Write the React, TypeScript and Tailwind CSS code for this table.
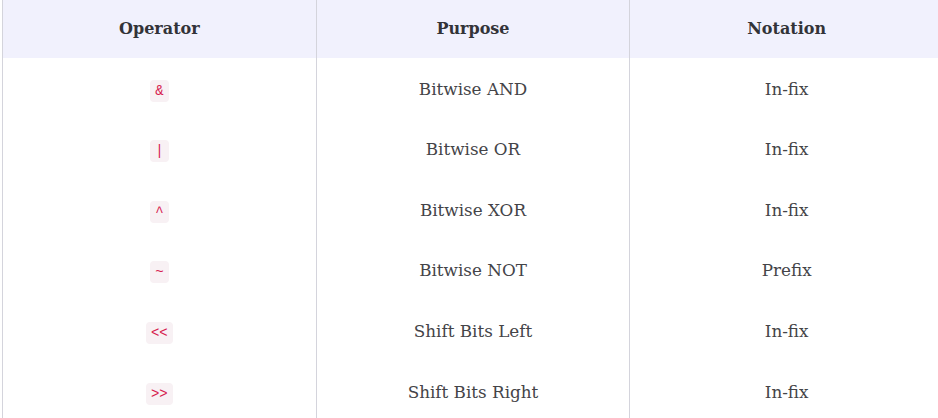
const rows = [
  { op: "&", purpose: "Bitwise AND", notation: "In-fix" },
  { op: "|", purpose: "Bitwise OR", notation: "In-fix" },
  { op: "^", purpose: "Bitwise XOR", notation: "In-fix" },
  { op: "~", purpose: "Bitwise NOT", notation: "Prefix" },
  { op: "<<", purpose: "Shift Bits Left", notation: "In-fix" },
  { op: ">>", purpose: "Shift Bits Right", notation: "In-fix" },
];

export default function App() {
  return (
    <div className="h-[418px] w-[938px] overflow-hidden bg-white pl-[2px] font-['DejaVu_Serif',serif]">
      <table className="w-[942px] table-fixed border-collapse text-[16.8px] text-[#444448]">
        <thead>
          <tr className="bg-[#f1f1fd]">
            {["Operator", "Purpose", "Notation"].map((h) => (
              <th
                key={h}
                className="h-[58px] border-x border-[#d4d4dc] text-center text-[16px] font-bold text-[#333338]"
              >
                {h}
              </th>
            ))}
          </tr>
        </thead>
        <tbody>
          {rows.map((r) => (
            <tr key={r.op}>
              <td className="h-[60.6px] border-x border-[#d4d4dc] pt-[2px] text-center">
                <code className="inline-block rounded-[4px] bg-[#f8f1f4] px-[5px] py-[2px] font-['Liberation_Mono',monospace] text-[14px] leading-[18px] text-[#d6204e]">
                  {r.op}
                </code>
              </td>
              <td className="h-[60.6px] border-x border-[#d4d4dc] pt-[2px] text-center">
                {r.purpose}
              </td>
              <td className="h-[60.6px] border-x border-[#d4d4dc] pt-[2px] text-center">
                {r.notation}
              </td>
            </tr>
          ))}
        </tbody>
      </table>
    </div>
  );
}
